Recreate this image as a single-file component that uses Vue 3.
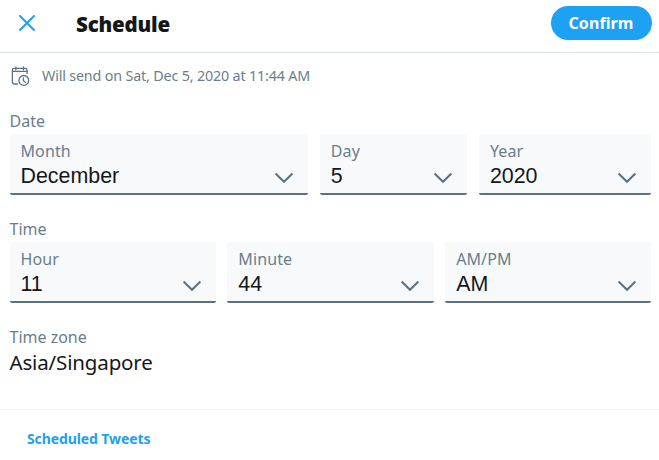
<template>
  <div class="schedule">
    <header class="topbar">
      <button type="button" class="close" aria-label="Close">
        <svg width="18" height="18" viewBox="0 0 18 18">
          <path d="M2 2L16 16M16 2L2 16" />
        </svg>
      </button>
      <h1>Schedule</h1>
      <button type="button" class="confirm">Confirm</button>
    </header>

    <main>
      <div class="status">
        <svg width="20" height="21" viewBox="0 0 20 21">
          <path d="M6.4 18H3.2A1.8 1.8 0 0 1 1.4 16.2V4.2A1.8 1.8 0 0 1 3.2 2.4H14.3A1.8 1.8 0 0 1 16.1 4.2V7.6" />
          <path d="M1.5 5.4H16M4.9 1V3.8M12.5 1V3.8" />
          <circle cx="12.8" cy="14.4" r="4.9" />
          <path d="M12.4 12V14.7L14.4 16.2" />
        </svg>
        <span>{{ sendText }}</span>
      </div>

      <section v-for="g in groups" :key="g.title" class="group">
        <div class="group-title">{{ g.title }}</div>
        <div class="fields" :class="g.title.toLowerCase()">
          <label v-for="f in g.fields" :key="f.key" class="field">
            <span>{{ f.label }}</span>
            <select v-model="form[f.key]">
              <option v-for="o in f.options" :key="o" :value="o">{{ o }}</option>
            </select>
            <svg class="arrow" width="20" height="12" viewBox="0 0 20 12">
              <path d="M1.6 1.5L10 9.8L18.4 1.5" />
            </svg>
          </label>
        </div>
      </section>

      <section class="zone">
        <div class="group-title">Time zone</div>
        <div class="zone-name">Asia/Singapore</div>
      </section>
    </main>

    <footer>
      <a href="#">Scheduled Tweets</a>
    </footer>
  </div>
</template>

<script setup>
import { reactive, computed } from 'vue'

const months = ['January', 'February', 'March', 'April', 'May', 'June', 'July',
  'August', 'September', 'October', 'November', 'December']
const days = ['Sun', 'Mon', 'Tue', 'Wed', 'Thu', 'Fri', 'Sat']

const range = (from, to) => Array.from({ length: to - from + 1 }, (_, i) => String(from + i))

const form = reactive({
  month: 'December',
  day: '5',
  year: '2020',
  hour: '11',
  minute: '44',
  period: 'AM',
})

const groups = [
  {
    title: 'Date',
    fields: [
      { key: 'month', label: 'Month', options: months },
      { key: 'day', label: 'Day', options: range(1, 31) },
      { key: 'year', label: 'Year', options: range(2020, 2022) },
    ],
  },
  {
    title: 'Time',
    fields: [
      { key: 'hour', label: 'Hour', options: range(1, 12) },
      { key: 'minute', label: 'Minute', options: range(0, 59).map(m => m.padStart(2, '0')) },
      { key: 'period', label: 'AM/PM', options: ['AM', 'PM'] },
    ],
  },
]

const sendText = computed(() => {
  const date = new Date(Number(form.year), months.indexOf(form.month), Number(form.day))
  const day = days[date.getDay()]
  return `Will send on ${day}, ${form.month.slice(0, 3)} ${form.day}, ${form.year} at ${form.hour}:${form.minute} ${form.period}`
})
</script>

<style>
body { margin: 0; background: #fff; }
</style>

<style scoped>
.schedule {
  height: 460px;
  display: flex;
  flex-direction: column;
  overflow: hidden;
  background: #fff;
  color: #14171a;
  font-family: 'Noto Sans', 'Open Sans', sans-serif;
}

.topbar {
  display: flex;
  align-items: center;
  height: 53px;
  box-sizing: border-box;
  padding: 0 7.5px 7px 17.5px;
  border-bottom: 1px solid #d9e2e9;
  flex: none;
}

svg { fill: none; stroke: #5b7083; display: block; flex: none; }

button { border: none; padding: 0; cursor: pointer; font-family: inherit; }

.close { background: none; }
.close svg { stroke: #1da1f2; stroke-width: 2; stroke-linecap: round; }

h1 {
  flex: 1;
  margin: 2px 0 0 40.5px;
  font-size: 20.5px;
  font-weight: 900;
  line-height: 28px;
  letter-spacing: -0.2px;
}

.confirm {
  width: 101px;
  height: 34px;
  border-radius: 17px;
  background: #1da1f2;
  color: #fff;
  font-size: 16px;
  font-weight: 700;
  letter-spacing: 0.1px;
}

main { flex: 1; padding: 0 7.5px 0 9.5px; }

.status {
  display: flex;
  align-items: center;
  gap: 11px;
  height: 24px;
  margin: 10px 0 23px 1.5px;
  color: #6b7d8c;
  font-size: 14.3px;
  letter-spacing: -0.16px;
}

.status svg { margin-top: 2px; stroke-width: 1.3; stroke-linecap: round; }

.group-title { color: #6b7d8c; font-size: 16px; line-height: 22px; }

.group { height: 108px; }

.fields { display: grid; gap: 11.5px; margin-top: 2px; }
.fields.date { grid-template-columns: 298.7fr 147.5fr 172.5fr; }
.fields.time { grid-template-columns: repeat(3, 1fr); }

.field {
  position: relative;
  min-width: 0;
  height: 61px;
  box-sizing: border-box;
  padding: 6px 11px 0;
  background: #f7f9fa;
  border-bottom: 2px solid #5b7083;
  border-radius: 2px;
}

.field span { display: block; color: #6b7d8c; font-size: 16px; line-height: 22px; letter-spacing: 0.1px; }

select {
  display: block;
  width: 100%;
  height: 28px;
  padding: 0;
  border: none;
  outline: none;
  appearance: none;
  background: none;
  color: #14171a;
  font-family: 'Liberation Sans', Arial, sans-serif;
  font-size: 21.4px;
}

/* sits over the select, clicks fall through to it */
.arrow { position: absolute; right: 14px; bottom: 9px; stroke-width: 2; pointer-events: none; }

.zone-name { font-size: 20.5px; line-height: 29px; letter-spacing: -0.15px; }

footer {
  height: 51px;
  box-sizing: border-box;
  padding: 18px 27px 0;
  border-top: 1px solid #f0f1f2;
}

footer a {
  display: block;
  color: #1da1f2;
  font-size: 14px;
  font-weight: 700;
  line-height: 22px;
  letter-spacing: -0.1px;
  text-decoration: none;
}
</style>
